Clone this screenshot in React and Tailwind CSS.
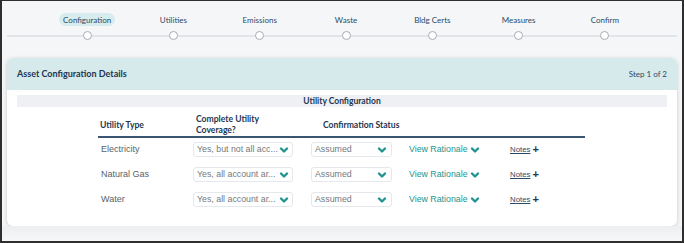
import React from "react";

const steps = ["Configuration", "Utilities", "Emissions", "Waste", "Bldg Certs", "Measures", "Confirm"];
const rows = [
  { type: "Electricity", cov: "Yes, but not all acc..." },
  { type: "Natural Gas", cov: "Yes, all account ar..." },
  { type: "Water", cov: "Yes, all account ar..." },
];

function Chevron({ className = "" }) {
  return (
    <svg viewBox="0 0 10 10" className={className} fill="none" stroke="currentColor" strokeWidth="2.4" strokeLinecap="round" strokeLinejoin="round">
      <path d="M2 3.5 L5 6.5 L8 3.5" />
    </svg>
  );
}

const arial = { fontFamily: "'Liberation Sans', Arial, sans-serif" };

export default function App() {
  return (
    <div
      className="w-[684px] h-[243px] overflow-hidden bg-[#2e2e2e] pl-[2px] pr-[2px] pt-[1px] pb-[2px]"
      style={{ fontFamily: "Lato, 'Open Sans', sans-serif" }}
    >
      <div className="w-full h-full bg-[#f4f6f8] relative flex flex-col">
        {/* Stepper */}
        <div className="relative h-[57px]">
          <div className="absolute left-[5px] right-[5px] top-[34px] h-[2px] bg-[#e1e4e8]" />
          <div className="relative flex pl-[42px] pt-[12px]">
            {steps.map((s, i) => (
              <div key={s} className="w-[86.3px] shrink-0 flex flex-col items-center">
                <div
                  className={
                    "h-[13px] flex items-center text-[8px] leading-none text-[#2c4a66] px-[4px] rounded-full whitespace-nowrap " +
                    (i === 0 ? "bg-[#d6ecee]" : "")
                  }
                >
                  {s}
                </div>
                <div className="mt-[5px] w-[9px] h-[9px] rounded-full bg-white border border-[#a8adb3]" />
              </div>
            ))}
          </div>
        </div>

        {/* Card */}
        <div className="ml-[5px] w-[670px] h-[168px] bg-white rounded-[6px] shadow-[0_1px_4px_rgba(0,0,0,0.18)] overflow-hidden">
          <div className="h-[32px] bg-[#d6e9eb] flex items-center justify-between px-[10px]">
            <div className="text-[9px] font-bold text-[#1d3651]">Asset Configuration Details</div>
            <div className="text-[8px] text-[#2c4a66]">Step 1 of 2</div>
          </div>
          <div className="px-[10px] pt-[5px]">
            <div className="h-[12px] bg-[#eef0f3] flex items-center justify-center text-[8.5px] font-bold text-[#1d3651]">
              Utility Configuration
            </div>
            <div className="ml-[81px] w-[487px]">
              <div className="grid grid-cols-[95px_118px_98px_101px_75px] items-center h-[31px] pt-[7px] border-b-[2px] border-[#3c5672] text-[8.6px] font-bold text-[#1d3651] leading-[11px]">
                <div className="pl-[2px]">Utility Type</div>
                <div className="pl-[3px]">
                  Complete Utility
                  <br />
                  Coverage?
                </div>
                <div className="pl-[12px]">Confirmation Status</div>
                <div />
                <div />
              </div>
              <div style={arial}>
                {rows.map((r) => (
                  <div key={r.type} className="grid grid-cols-[95px_118px_98px_101px_75px] items-start h-[25px]">
                    <div className="mt-[4px] h-[15px] flex items-center pl-[3px] text-[9px] text-[#5a5f66]">{r.type}</div>
                    <div className="mt-[4px]">
                      <div className="w-[100px] h-[15px] border border-[#e4e7eb] rounded-[3px] flex items-center justify-between pl-[3px] pr-[3px] text-[8.8px] text-[#74797e] whitespace-nowrap">
                        <span>{r.cov}</span>
                        <Chevron className="w-[10px] h-[10px] text-[#21948f] shrink-0" />
                      </div>
                    </div>
                    <div className="mt-[4px]">
                      <div className="w-[81px] h-[15px] border border-[#e4e7eb] rounded-[3px] flex items-center justify-between pl-[3px] pr-[4px] text-[8.8px] text-[#74797e]">
                        <span>Assumed</span>
                        <Chevron className="w-[10px] h-[10px] text-[#21948f]" />
                      </div>
                    </div>
                    <div className="mt-[4px] h-[15px] flex items-center gap-[2px] text-[8.8px] text-[#21948f] whitespace-nowrap">
                      <span>View Rationale</span>
                      <Chevron className="w-[10px] h-[10px]" />
                    </div>
                    <div className="mt-[4px] h-[15px] flex items-center gap-[2px] text-[7.8px] text-[#2c4a66]">
                      <span className="underline">Notes</span>
                      <span className="font-bold text-[11px] leading-none text-[#1d3651]">+</span>
                    </div>
                  </div>
                ))}
              </div>
            </div>
          </div>
        </div>
        <div className="flex-1 bg-gradient-to-b from-[#eceef0] to-[#f6f7f8]" />
      </div>
    </div>
  );
}
